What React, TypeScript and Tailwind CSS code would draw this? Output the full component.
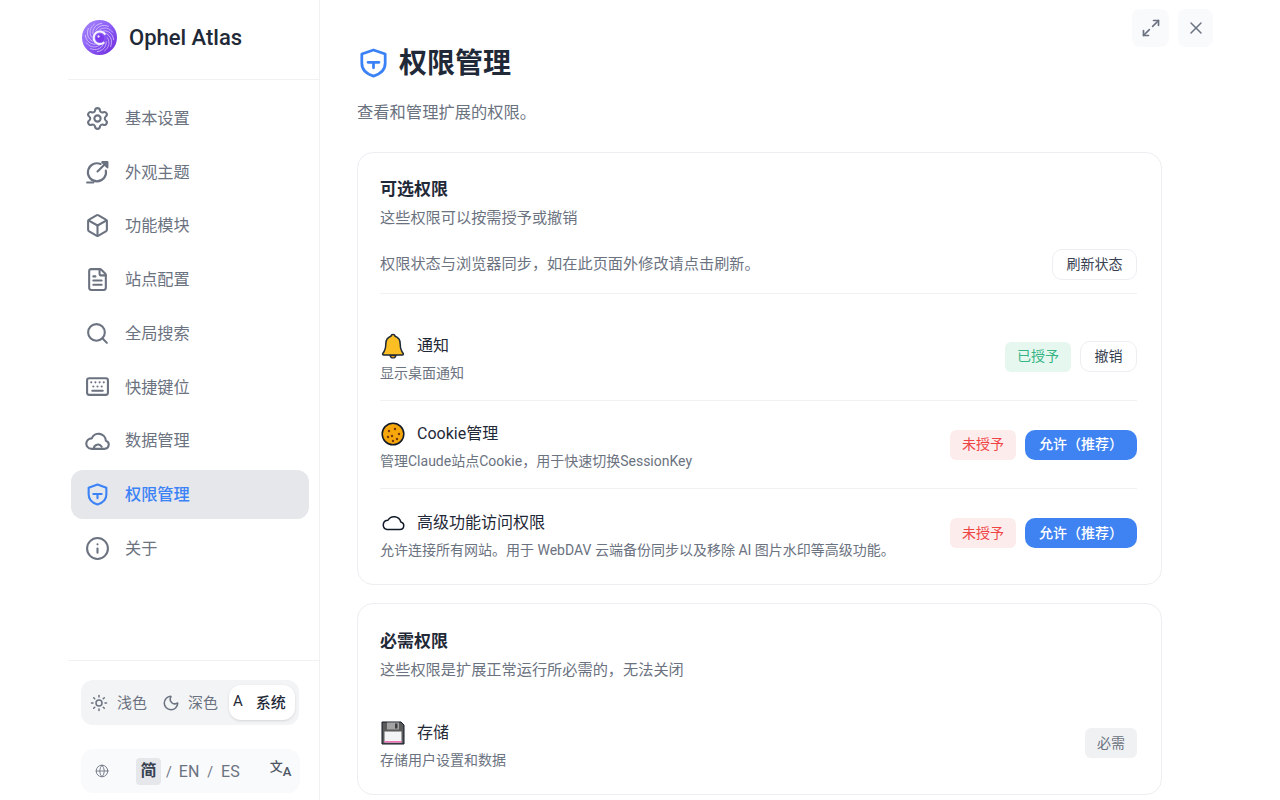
import { Settings, Box, FileText, Search, Keyboard, Info, Sun, Moon, Globe, Maximize2, X } from 'lucide-react'
import type { ReactNode } from 'react'

function ShieldIcon({ className }: { className?: string }) {
  return (
    <svg viewBox="0 0 24 24" fill="none" stroke="currentColor" strokeWidth="2" strokeLinecap="round" strokeLinejoin="round" className={className}>
      <path d="M12 2.500l8.500 3v6.500c0 4.800-3.400 8-8.500 9.500-5.100-1.500-8.500-4.700-8.500-9.500V5.500z" />
      <path d="M8 11.500h8M12 11.500v4" />
    </svg>
  )
}

function ThemeIcon({ className }: { className?: string }) {
  return (
    <svg viewBox="0 0 24 24" fill="none" stroke="currentColor" strokeWidth="2" strokeLinecap="round" strokeLinejoin="round" className={className}>
      <path d="M15 4.800a8.700 8.700 0 1 0 5 6.200" />
      <path d="M12 12l8-8" />
      <path d="M16.500 3h5v5z" fill="currentColor" />
      <path d="M2 22.500h6" />
    </svg>
  )
}

function DataCloudIcon({ className }: { className?: string }) {
  return (
    <svg viewBox="0 0 24 24" fill="none" stroke="currentColor" strokeWidth="2" strokeLinecap="round" strokeLinejoin="round" className={className}>
      <path d="M6 20h13a4 4 0 0 0 1-7.800A7 7 0 0 0 6.500 10 5 5 0 0 0 6 20z" />
      <path d="M8.500 20a4 4 0 0 1 7.500-2" />
    </svg>
  )
}

function Logo() {
  const blades = [0, 30, 60, 90, 120, 150, 180, 210, 240, 270, 300, 330]
  return (
    <svg viewBox="0 0 36 36" className="w-[35px] h-[35px]">
      <defs>
        <linearGradient id="logo-bg" x1="0" y1="0" x2="1" y2="1">
          <stop offset="0" stopColor="#a78bfa" />
          <stop offset="0.5" stopColor="#8b5cf6" />
          <stop offset="1" stopColor="#6d28d9" />
        </linearGradient>
      </defs>
      <circle cx="18" cy="18" r="18" fill="url(#logo-bg)" />
      {blades.map((a) => (
        <path key={a} d="M18 10C23 7 28 8 32 13" stroke="#f3e8ff" strokeOpacity="0.7" strokeWidth="0.8" fill="none" transform={`rotate(${a} 18 18)`} />
      ))}
      <path d="M24 15a6.500 6.500 0 1 0-1 8" stroke="#f5f3ff" strokeWidth="2.200" fill="none" />
      <circle cx="18.500" cy="18.500" r="4.200" fill="#7c3aed" />
      <circle cx="17" cy="17" r="1.200" fill="#ede9fe" />
    </svg>
  )
}

function BellIcon() {
  return (
    <svg viewBox="0 0 24 26" className="w-[24px] h-[26px]">
      <path d="M12 1.500c1.300 0 2 .8 2 1.800 3.600 1 5.200 4 5.200 7.700 0 4.500 1 7 3 9.500.5.700.1 1.500-.8 1.500H2.600c-.9 0-1.300-.8-.8-1.500 2-2.500 3-5 3-9.500 0-3.700 1.600-6.700 5.200-7.700 0-1 .7-1.800 2-1.800z" fill="#fbbf24" stroke="#1f2937" strokeWidth="1.500" strokeLinejoin="round" />
      <path d="M9 22.500c.4 1.500 1.600 2.500 3 2.500s2.600-1 3-2.500z" fill="#f59e0b" stroke="#1f2937" strokeWidth="1.200" />
    </svg>
  )
}

function CookieIcon() {
  const dots = [[8, 9], [14, 7], [18, 12], [11, 14], [16, 17], [7, 15], [12, 19]]
  return (
    <svg viewBox="0 0 24 24" className="w-[24px] h-[24px]">
      <circle cx="12" cy="12" r="10.800" fill="#f5a70b" stroke="#111827" strokeWidth="1.500" />
      {dots.map(([x, y]) => (
        <circle key={`${x}-${y}`} cx={x} cy={y} r="1.200" fill="#78350f" />
      ))}
    </svg>
  )
}

function CloudOutlineIcon() {
  return (
    <svg viewBox="0 0 24 16" fill="none" stroke="#111827" strokeWidth="1.500" className="w-[24px] h-[16px]">
      <path d="M6 14.500h13a3.800 3.800 0 0 0 .8-7.500A7 7 0 0 0 7 5.200 4.700 4.700 0 0 0 6 14.500z" strokeLinejoin="round" />
    </svg>
  )
}

function FloppyIcon() {
  return (
    <svg viewBox="0 0 24 24" className="w-[24px] h-[24px]">
      <path d="M1 1h19l3 3v19H1z" fill="#5b5b5b" stroke="#111827" strokeWidth="1" />
      <rect x="6" y="1.500" width="12" height="7" fill="#a3a3a3" />
      <rect x="14" y="2.500" width="2.500" height="5" fill="#404040" />
      <rect x="3.500" y="10.500" width="17" height="11" fill="#f3f4f6" />
      <rect x="3.500" y="20" width="17" height="1.500" fill="#f472b6" />
    </svg>
  )
}

const navItems = [
  { label: '基本设置', icon: Settings },
  { label: '外观主题', icon: ThemeIcon },
  { label: '功能模块', icon: Box },
  { label: '站点配置', icon: FileText },
  { label: '全局搜索', icon: Search },
  { label: '快捷键位', icon: Keyboard },
  { label: '数据管理', icon: DataCloudIcon },
  { label: '权限管理', icon: ShieldIcon, active: true },
  { label: '关于', icon: Info },
]

function Sidebar() {
  return (
    <aside className="w-[252px] h-full shrink-0 border-r border-[#f0f1f3] flex flex-col">
      <div className="h-[80px] shrink-0 border-b border-[#f0f1f3] flex items-center pl-[14px] pb-[5px] gap-3">
        <Logo />
        <span className="text-[22px] font-medium text-[#1f2937]">Ophel Atlas</span>
      </div>
      <nav className="flex-1 flex flex-col gap-[4.75px] pt-[13.5px] pl-[3px] pr-[10px]">
        {navItems.map((item) => {
          const Icon = item.icon
          return (
            <div
              key={item.label}
              className={`h-[49px] shrink-0 flex items-center gap-[15px] pl-[14px] rounded-xl ${item.active ? 'bg-[#e5e7eb] text-[#3b82f6] font-medium' : 'text-[#6b7280]'}`}
            >
              <Icon className="w-[25px] h-[25px]" />
              <span className="text-[16.2px] translate-y-[1px]">{item.label}</span>
            </div>
          )
        })}
      </nav>
      <div className="h-[140px] shrink-0 border-t border-[#f0f1f3] pt-[19px] px-[13px]">
        <div className="h-[45px] w-[218px] bg-[#f3f4f6] rounded-xl flex items-center pl-[9px] pr-1 text-[15px] text-[#6b7280]">
          <Sun className="w-[18px] h-[18px] mr-[9px]" />
          <span className="translate-y-[1px]">浅色</span>
          <Moon className="w-[18px] h-[18px] ml-[15px] mr-[8px]" />
          <span className="translate-y-[1px]">深色</span>
          <div className="ml-[11px] h-[35px] flex-1 bg-white rounded-xl shadow text-[#1f2937] flex items-center pl-[4px] gap-[13px]">
            <span className="text-[15px] translate-y-[-1px]">A</span>
            <span className="font-medium translate-y-[1px]">系统</span>
          </div>
        </div>
        <div className="mt-[24px] h-[44px] w-[219px] bg-[#f9fafb] rounded-xl flex items-center pl-[14px] text-[16px] text-[#6b7280]">
          <Globe className="w-[14px] h-[14px] mr-[27px]" strokeWidth={1.500} />
          <span className="w-[25px] h-[27px] rounded bg-[#e5e7eb] flex items-center justify-center font-bold text-[#374151]">简</span>
          <span className="ml-[5px] mr-[7px] text-[14px] translate-y-[1px]">/</span>
          <span className="translate-y-[1px]">EN</span>
          <span className="mx-[8px] text-[14px] translate-y-[1px]">/</span>
          <span className="translate-y-[1px]">ES</span>
          <span className="ml-[30px] flex items-end text-[#4b5563] leading-none font-medium">
            <span className="text-[13px] -translate-y-[5px]">文</span>
            <span className="text-[13px]">A</span>
          </span>
        </div>
      </div>
    </aside>
  )
}

function Badge({ tone, children }: { tone: 'green' | 'red' | 'gray'; children: ReactNode }) {
  const toneClass = {
    green: 'bg-[#e6f7f0] text-[#34b583]',
    red: 'bg-[#fdecec] text-[#ef4444]',
    gray: 'bg-[#f0f1f3] text-[#6b7280]',
  }[tone]
  return <span className={`h-[30px] rounded-md px-[12px] flex items-center text-[14px] ${toneClass}`}>{children}</span>
}

function OutlineButton({ children }: { children: ReactNode }) {
  return (
    <button className="h-[31px] px-[13.5px] rounded-[10px] border border-[#eceef1] bg-white text-[14px] text-[#374151]">
      {children}
    </button>
  )
}

function AllowButton() {
  return (
    <button className="h-[30px] w-[112px] rounded-[10px] bg-[#3f83f2] text-white text-[14px] font-medium">
      允许（推荐）
    </button>
  )
}

function PermissionRow({ icon, title, desc, actions, divider }: { icon: ReactNode; title: string; desc: string; actions: ReactNode; divider?: boolean }) {
  return (
    <div className={`h-[88px] flex items-center justify-between ${divider ? 'border-b border-[#f0f1f3]' : ''}`}>
      <div className="pt-[2px]">
        <div className="flex items-center h-[30px] gap-[11px]">
          <span className="w-[26px] flex justify-center">{icon}</span>
          <span className="text-[16px] text-[#1f2937]">{title}</span>
        </div>
        <p className="text-[14px] text-[#6b7280] mt-[2px]">{desc}</p>
      </div>
      <div className="flex items-center gap-[9px]">{actions}</div>
    </div>
  )
}

function CardHeader({ title, desc }: { title: string; desc: string }) {
  return (
    <>
      <h2 className="text-[17px] leading-[26px] font-semibold text-[#1f2937]">{title}</h2>
      <p className="text-[15.2px] leading-[22px] mt-[5px] text-[#6b7280]">{desc}</p>
    </>
  )
}

export default function App() {
  return (
    <div className="h-screen w-screen overflow-hidden bg-white flex pl-[68px] font-[Roboto,'Noto_Sans_CJK_SC',sans-serif]">
      <Sidebar />
      <main className="relative flex-1 overflow-hidden pl-[37px]">
        <div className="absolute top-[9px] left-[812px] flex gap-[9px]">
          <button className="w-[37px] h-[38px] rounded-lg bg-[#f9fafb] text-[#6b7280] flex items-center justify-center">
            <Maximize2 className="w-[20px] h-[20px]" />
          </button>
          <button className="w-[35px] h-[38px] rounded-lg bg-[#f9fafb] text-[#6b7280] flex items-center justify-center">
            <X className="w-[20px] h-[20px]" strokeWidth={1.750} />
          </button>
        </div>

        <div className="pt-[44px] flex items-center gap-[9px]">
          <ShieldIcon className="w-[33px] h-[36px] text-[#3b82f6]" />
          <h1 className="text-[28px] leading-[38px] font-bold text-[#1f2937] translate-y-[1px]">权限管理</h1>
        </div>
        <p className="mt-[19px] text-[16.3px] leading-[24px] text-[#6b7280]">查看和管理扩展的权限。</p>

        <section className="mt-[27px] w-[805px] h-[433px] border border-[#eceef1] rounded-2xl pl-[22px] pr-[24px] pt-[23px]">
          <CardHeader title="可选权限" desc="这些权限可以按需授予或撤销" />
          <div className="mt-[20px] pb-[13px] border-b border-[#f0f1f3] flex items-center justify-between">
            <span className="text-[15.2px] text-[#6b7280]">权限状态与浏览器同步，如在此页面外修改请点击刷新。</span>
            <OutlineButton>刷新状态</OutlineButton>
          </div>
          <div className="mt-[19px]">
            <PermissionRow
              divider
              icon={<BellIcon />}
              title="通知"
              desc="显示桌面通知"
              actions={<><Badge tone="green">已授予</Badge><OutlineButton>撤销</OutlineButton></>}
            />
            <PermissionRow
              divider
              icon={<CookieIcon />}
              title="Cookie管理"
              desc="管理Claude站点Cookie，用于快速切换SessionKey"
              actions={<><Badge tone="red">未授予</Badge><AllowButton /></>}
            />
            <PermissionRow
              icon={<CloudOutlineIcon />}
              title="高级功能访问权限"
              desc="允许连接所有网站。用于 WebDAV 云端备份同步以及移除 AI 图片水印等高级功能。"
              actions={<><Badge tone="red">未授予</Badge><AllowButton /></>}
            />
          </div>
        </section>

        <section className="mt-[18px] w-[805px] h-[192px] border border-[#eceef1] rounded-2xl pl-[22px] pr-[24px] pt-[24px]">
          <CardHeader title="必需权限" desc="这些权限是扩展正常运行所必需的，无法关闭" />
          <div className="mt-[18px]">
            <PermissionRow
              icon={<FloppyIcon />}
              title="存储"
              desc="存储用户设置和数据"
              actions={<Badge tone="gray">必需</Badge>}
            />
          </div>
        </section>
      </main>
    </div>
  )
}
